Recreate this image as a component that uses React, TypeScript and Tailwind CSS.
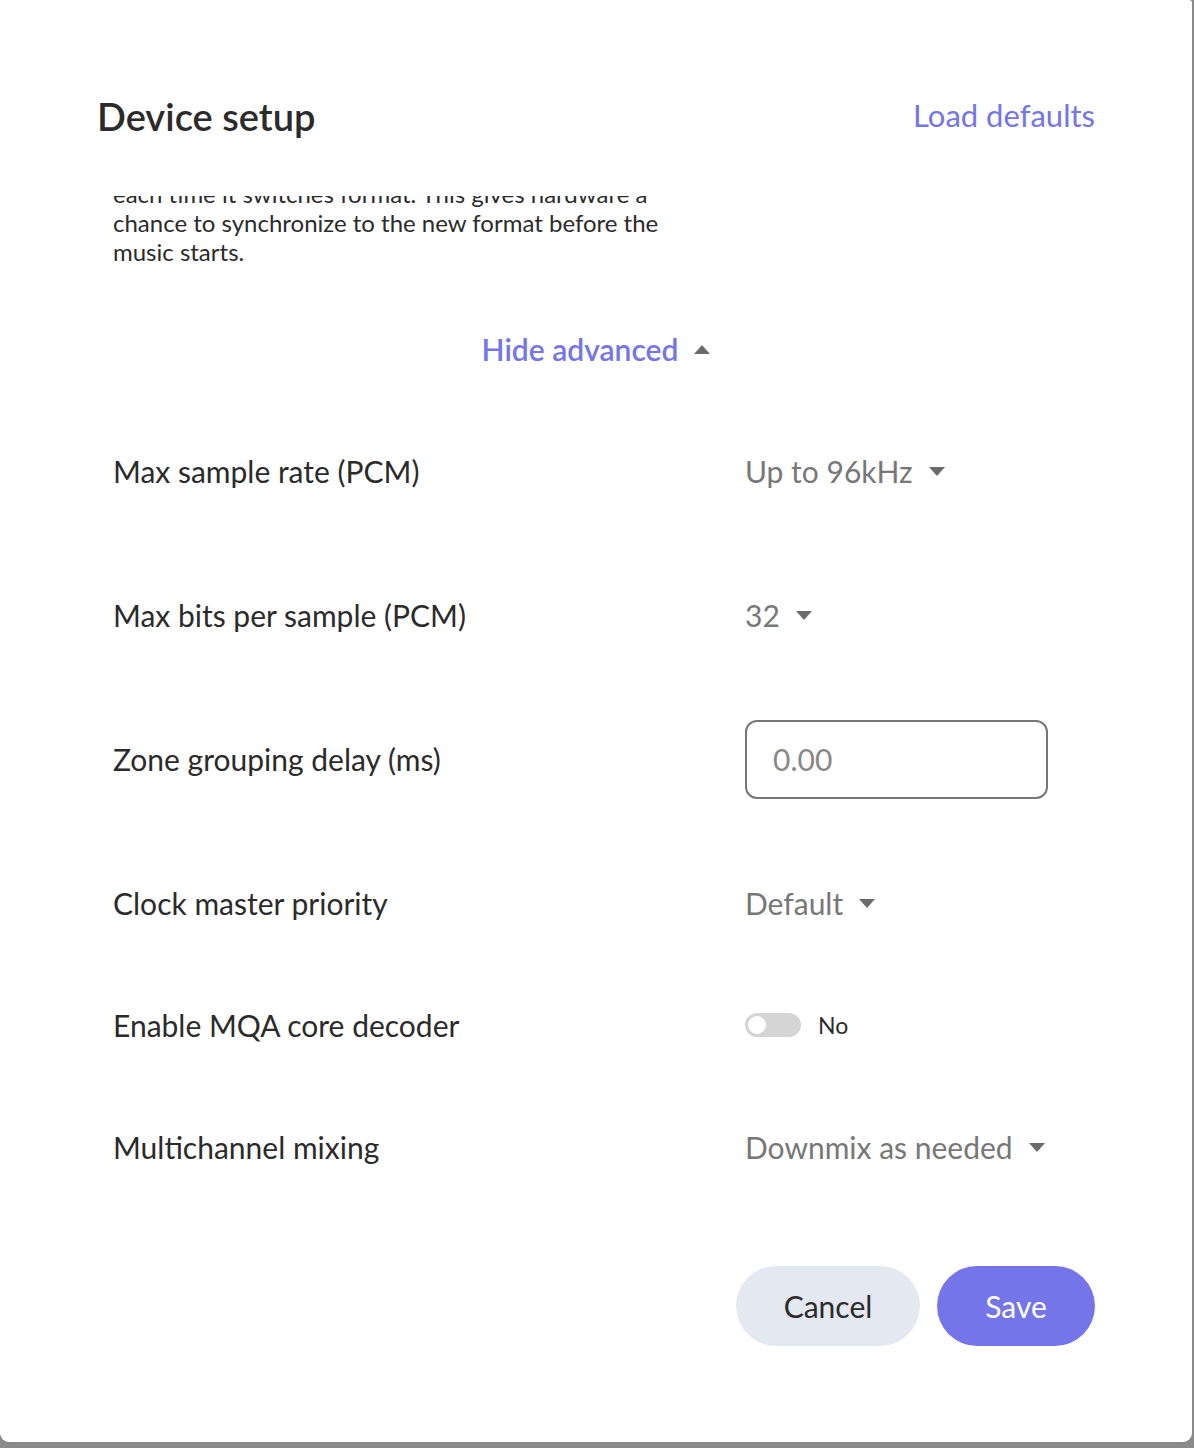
import React from "react";

const Caret = ({ up = false }: { up?: boolean }) => (
  <svg width="16" height="9" viewBox="0 0 16 9" className="shrink-0">
    {up ? (
      <path d="M0 9 L8 0 L16 9 Z" fill="#6b6b6b" />
    ) : (
      <path d="M0 0 L16 0 L8 9 Z" fill="#6b6b6b" />
    )}
  </svg>
);

const Select = ({ value }: { value: string }) => (
  <div className="flex items-center gap-[16px] text-[30px] text-[#777777] leading-none">
    <span>{value}</span>
    <Caret />
  </div>
);

const Row = ({ label, h, children }: { label: string; h: string; children: React.ReactNode }) => (
  <div className={`grid grid-cols-[632px_1fr] items-center ${h}`}>
    <div className="text-[30px] text-[#2b2b2b] leading-none">{label}</div>
    <div className="flex items-center">{children}</div>
  </div>
);

export default function App() {
  return (
    <div className="w-full h-[1448px] bg-[#8a8a8a] overflow-hidden" style={{ fontFamily: "Lato, 'Open Sans', sans-serif" }}>
      <div className="w-[1192px] h-[1442px] bg-white rounded-b-[9px] rounded-tr-[3px] flex flex-col">
        <div className="flex items-center justify-between px-[97px] pt-[95px] h-[139px]">
          <h1 className="text-[38px] font-semibold text-[#2b2b2b] leading-[44px] -mt-[3px]">Device setup</h1>
          <button className="text-[31px] text-[#7375e8] leading-[44px] -mt-[4px]">Load defaults</button>
        </div>
        <div className="h-[57px]" />
        <div className="overflow-hidden flex flex-col pl-[113px] pr-[97px]">
          <div className="-mt-[17.5px] text-[24px] leading-[29px] text-[#2b2b2b] whitespace-nowrap">
            <div>each time it switches format. This gives hardware a</div>
            <div>chance to synchronize to the new format before the</div>
            <div>music starts.</div>
          </div>
          <div className="mt-[53.5px] h-[60px] flex items-center justify-center gap-[16px] -ml-[16px]">
            <span className="text-[30px] font-semibold text-[#7375e8] leading-none">Hide advanced</span>
            <Caret up />
          </div>
          <div className="mt-[20px] flex flex-col">
            <Row label="Max sample rate (PCM)" h="h-[144px]">
              <Select value="Up to 96kHz" />
            </Row>
            <Row label="Max bits per sample (PCM)" h="h-[144px]">
              <Select value="32" />
            </Row>
            <Row label="Zone grouping delay (ms)" h="h-[144px]">
              <div className="w-[303px] h-[79px] border-2 border-[#777777] rounded-[12px] flex items-center px-[26px] text-[30px] text-[#888888]">
                0.00
              </div>
            </Row>
            <Row label="Clock master priority" h="h-[144px]">
              <Select value="Default" />
            </Row>
            <Row label="Enable MQA core decoder" h="h-[100px]">
              <div className="flex items-center gap-[17px]">
                <div className="w-[56px] h-[24px] rounded-full bg-[#d5d5d5] flex items-center px-[3px]">
                  <div className="w-[18px] h-[18px] rounded-full bg-white" />
                </div>
                <span className="text-[23px] text-[#2b2b2b] leading-none">No</span>
              </div>
            </Row>
            <Row label="Multichannel mixing" h="h-[144px]">
              <Select value="Downmix as needed" />
            </Row>
          </div>
        </div>
        <div className="flex justify-end gap-[17px] px-[97px] mt-[47px]">
          <button className="w-[184px] h-[80px] rounded-full bg-[#e4e8f1] text-[30px] text-[#2b2b2b]">Cancel</button>
          <button className="w-[158px] h-[80px] rounded-full bg-[#7375e8] text-[30px] text-white">Save</button>
        </div>
      </div>
    </div>
  );
}
